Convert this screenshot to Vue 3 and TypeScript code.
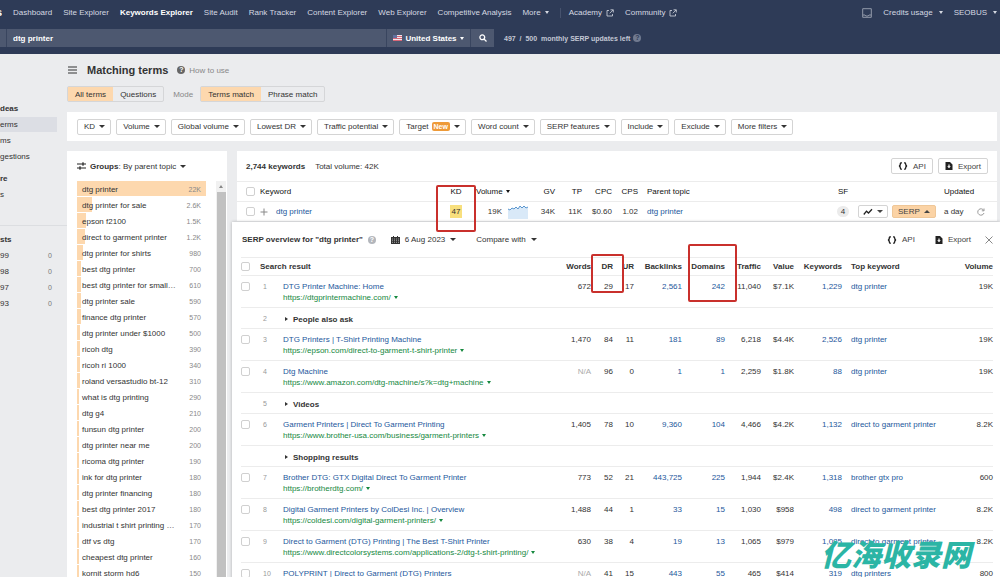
<script setup lang="ts">
import { h, ref, type FunctionalComponent } from 'vue'

const svg = (cls: string, box: string, d: string, extra: Record<string, string> = {}) =>
  h('svg', { class: cls, viewBox: box, 'aria-hidden': 'true', fill: 'none', stroke: 'currentColor', ...extra }, [h('path', { d })])

const External: FunctionalComponent = () =>
  svg('icon', '0 0 8 8', 'M3 1.5H1v5.5h5.5V5M4.5.8H7.3V3.5M7.2.9L3.8 4.3', { 'stroke-width': '0.8' })
const Braces: FunctionalComponent = () =>
  svg('icon wide', '0 0 10 8', 'M3.8.7C2.4.7 2.3 1.2 2.3 2.3S2.2 3.8 1 4C2.2 4.2 2.3 4.7 2.3 5.7S2.4 7.3 3.8 7.3M6.2.7C7.6.7 7.7 1.2 7.7 2.3S7.8 3.8 9 4C7.8 4.2 7.7 4.7 7.7 5.7S7.6 7.3 6.2 7.3', { stroke: '#222', 'stroke-width': '1.4' })
const FileDown: FunctionalComponent = () =>
  svg('icon', '0 0 8 8', 'M.5 0H5L7.5 2.5V8H.5ZM3.4 2.5V4.2H2.2L4 6.3L5.8 4.2H4.6V2.5Z', { fill: '#222', stroke: 'none', 'fill-rule': 'evenodd' })

const nav = ['Dashboard', 'Site Explorer', 'Keywords Explorer', 'Site Audit', 'Rank Tracker', 'Content Explorer', 'Web Explorer', 'Competitive Analysis']
const filters = ['KD', 'Volume', 'Global volume', 'Lowest DR', 'Traffic potential', 'Target', 'Word count', 'SERP features', 'Include', 'Exclude', 'More filters']
const lists = ['99', '98', '97', '93']
const query = ref('dtg printer')

const groups: { name: string; vol: string; share: number }[] = [
  { name: 'dtg printer', vol: '22K', share: 100 },
  { name: 'dtg printer for sale', vol: '2.6K', share: 12 },
  { name: 'epson f2100', vol: '1.5K', share: 7 },
  { name: 'direct to garment printer', vol: '1.2K', share: 6 },
  { name: 'dtg printer for shirts', vol: '980', share: 5 },
  { name: 'best dtg printer', vol: '700', share: 3 },
  { name: 'best dtg printer for small…', vol: '610', share: 3 },
  { name: 'dtg printer sale', vol: '590', share: 3 },
  { name: 'finance dtg printer', vol: '570', share: 3 },
  { name: 'dtg printer under $1000', vol: '500', share: 2 },
  { name: 'ricoh dtg', vol: '390', share: 2 },
  { name: 'ricoh ri 1000', vol: '340', share: 2 },
  { name: 'roland versastudio bt-12', vol: '310', share: 2 },
  { name: 'what is dtg printing', vol: '290', share: 1 },
  { name: 'dtg g4', vol: '210', share: 1 },
  { name: 'funsun dtg printer', vol: '200', share: 1 },
  { name: 'dtg printer near me', vol: '200', share: 1 },
  { name: 'ricoma dtg printer', vol: '190', share: 1 },
  { name: 'ink for dtg printer', vol: '180', share: 1 },
  { name: 'dtg printer financing', vol: '180', share: 1 },
  { name: 'best dtg printer 2017', vol: '180', share: 1 },
  { name: 'industrial t shirt printing …', vol: '170', share: 1 },
  { name: 'dtf vs dtg', vol: '170', share: 1 },
  { name: 'cheapest dtg printer', vol: '160', share: 1 },
  { name: 'kornit storm hd6', vol: '150', share: 1 },
]

interface Result {
  n: string
  title: string
  url?: string
  m?: string[]
  kw?: string
  vol?: string
}
const results: Result[] = [
  { n: '1', title: 'DTG Printer Machine: Home', url: 'https://dtgprintermachine.com/', m: ['672', '29', '17', '2,561', '242', '11,040', '$7.1K', '1,229'], kw: 'dtg printer', vol: '19K' },
  { n: '2', title: 'People also ask' },
  { n: '3', title: 'DTG Printers | T-Shirt Printing Machine', url: 'https://epson.com/direct-to-garment-t-shirt-printer', m: ['1,470', '84', '11', '181', '89', '6,218', '$4.4K', '2,526'], kw: 'dtg printer', vol: '19K' },
  { n: '4', title: 'Dtg Machine', url: 'https://www.amazon.com/dtg-machine/s?k=dtg+machine', m: ['N/A', '96', '0', '1', '1', '2,259', '$1.8K', '88'], kw: 'dtg printer', vol: '19K' },
  { n: '5', title: 'Videos' },
  { n: '6', title: 'Garment Printers | Direct To Garment Printing', url: 'https://www.brother-usa.com/business/garment-printers', m: ['1,405', '78', '10', '9,360', '104', '4,466', '$4.2K', '1,132'], kw: 'direct to garment printer', vol: '8.2K' },
  { n: '', title: 'Shopping results' },
  { n: '7', title: 'Brother DTG: GTX Digital Direct To Garment Printer', url: 'https://brotherdtg.com/', m: ['773', '52', '21', '443,725', '225', '1,944', '$2.4K', '1,318'], kw: 'brother gtx pro', vol: '600' },
  { n: '8', title: 'Digital Garment Printers by ColDesi Inc. | Overview', url: 'https://coldesi.com/digital-garment-printers/', m: ['1,488', '44', '1', '33', '15', '1,030', '$958', '498'], kw: 'direct to garment printer', vol: '8.2K' },
  { n: '9', title: 'Direct to Garment (DTG) Printing | The Best T-Shirt Printer', url: 'https://www.directcolorsystems.com/applications-2/dtg-t-shirt-printing/', m: ['630', '38', '4', '19', '13', '1,065', '$979', '1,085'], kw: 'direct to garment printer', vol: '8.2K' },
  { n: '10', title: 'POLYPRINT | Direct to Garment (DTG) Printers', m: ['N/A', '41', '15', '443', '55', '465', '$414', '319'], kw: 'dtg printers', vol: '800' },
]
const linked = [3, 4, 7]
</script>

<template>
  <div class="page">
    <header class="top">
      <nav class="nav">
        <b class="logo">s</b>
        <a v-for="item in nav" :key="item" href="#" :class="{ current: item === 'Keywords Explorer' }">{{ item }}</a>
        <button class="plain">More<i class="caret"></i></button>
        <span class="bar"></span>
        <a href="#" class="with-icon">Academy <External /></a>
        <a href="#" class="with-icon">Community <External /></a>
        <span class="account">
          <svg class="inbox" viewBox="0 0 10 10" fill="none" stroke="currentColor" aria-hidden="true"><path d="M.7.7h8.6v8.6H.7zM.7 7h2.3l.8 1h2.4l.8-1h2.3" /></svg>
          <button class="plain">Credits usage<i class="caret"></i></button>
          <button class="plain">SEOBUS<i class="caret"></i></button>
        </span>
      </nav>
      <form class="search" @submit.prevent>
        <div class="field">
          <span class="stub"></span>
          <input v-model="query" type="text" aria-label="Keyword" />
          <button type="button" class="country">
            <svg class="flag" viewBox="0 0 9 6" aria-hidden="true"><path fill="#f3e7ec" d="M0 0h9v6H0z" /><path fill="#d66878" d="M0 1h9v1H0zM0 3h9v1H0zM0 5h9v1H0z" /><path fill="#63719e" d="M0 0h4v3H0z" /></svg>
            United States<i class="caret"></i>
          </button>
          <button type="submit" class="go" aria-label="Search">
            <svg class="icon" viewBox="0 0 8 8" fill="none" stroke="currentColor" stroke-width="1.3" aria-hidden="true"><circle cx="3.3" cy="3.3" r="2.4" /><path d="M5 5l2.5 2.5" /></svg>
          </button>
        </div>
        <span class="quota">497&nbsp; / &nbsp;500&nbsp; monthly SERP updates left</span>
        <span class="help dim">?</span>
      </form>
    </header>

    <div class="body">
      <aside class="side">
        <b>deas</b>
        <a href="#" class="on">erms</a>
        <a href="#">ms</a>
        <a href="#">gestions</a>
        <b class="gap">re</b>
        <a href="#">s</a>
        <hr />
        <b>sts</b>
        <a v-for="l in lists" :key="l" href="#">{{ l }}<span>0</span></a>
      </aside>

      <main class="main">
        <div class="heading">
          <svg class="burger" viewBox="0 0 9 8" stroke="#333" stroke-width="1.2" aria-hidden="true"><path d="M0 1h9M0 4h9M0 7h9" /></svg>
          <h1>Matching terms</h1>
          <a href="#" class="how"><span class="help">?</span>How to use</a>
        </div>
        <div class="modes">
          <span class="toggle"><button class="on">All terms</button><button>Questions</button></span>
          <span class="mode">Mode</span>
          <span class="toggle"><button class="on">Terms match</button><button>Phrase match</button></span>
        </div>

        <section class="card filters">
          <button v-for="f in filters" :key="f" class="btn">
            {{ f }}<em v-if="f === 'Target'">New</em><i class="caret"></i>
          </button>
        </section>

        <div class="columns">
          <section class="card groups">
            <button class="plain by">
              <svg class="sliders" viewBox="0 0 9 8" fill="none" stroke="#222" stroke-width="1.2" aria-hidden="true"><path d="M0 2h9M0 6h9M6 .3v3.4M3 4.3v3.4" /></svg>
              <b>Groups</b>: By parent topic<i class="caret"></i>
            </button>
            <div class="scroller">
              <ul>
                <li v-for="g in groups" :key="g.name">
                  <span class="fill" :style="{ width: g.share + '%' }"></span>
                  <a href="#">{{ g.name }}</a><small>{{ g.vol }}</small>
                </li>
              </ul>
              <div class="track"><i class="caret up"></i><span></span></div>
            </div>
          </section>

          <div class="right">
            <section class="card keywords">
              <div class="tools">
                <b>2,744 keywords</b><span class="total">Total volume: 42K</span>
                <button class="btn push"><Braces />API</button>
                <button class="btn"><FileDown />Export</button>
              </div>
              <table class="kw">
                <colgroup><col class="w23" /><col /><col class="w40" /><col class="w32" /><col class="w20" /><col class="w27" /><col class="w27" /><col class="w30" /><col class="w26" /><col class="w190" /><col class="w30" /><col class="w80" /><col class="w39" /><col class="w20" /></colgroup>
                <thead>
                  <tr>
                    <th class="edge"><input type="checkbox" aria-label="Select all keywords" /></th>
                    <th>Keyword</th>
                    <th class="c">KD<span class="mark kd"></span></th>
                    <th class="r">Volume<i class="caret tight"></i></th>
                    <th></th><th class="r">GV</th><th class="r">TP</th><th class="r">CPC</th><th class="r">CPS</th>
                    <th class="lead">Parent topic</th><th class="c">SF</th><th></th><th class="upd">Updated</th><th></th>
                  </tr>
                </thead>
                <tbody>
                  <tr>
                    <td class="edge"><input type="checkbox" aria-label="Select dtg printer" /></td>
                    <td><span class="term"><svg class="icon" viewBox="0 0 8 8" stroke="#888" aria-hidden="true"><path d="M4 .5v7M.5 4h7" /></svg><a href="#">dtg printer</a></span></td>
                    <td class="c"><span class="score">47</span></td>
                    <td class="r inset">19K</td>
                    <td><svg class="spark" viewBox="0 0 20 14" aria-hidden="true"><path fill="#d9e9f8" d="M0 4l2 1 2-2 2 1 2-2 2 2 2-3 2 2 2-2 2 2 2-1v12H0z" /><path fill="none" stroke="#5a96cf" d="M0 4l2 1 2-2 2 1 2-2 2 2 2-3 2 2 2-2 2 2 2-1" /></svg></td>
                    <td class="r">34K</td><td class="r">11K</td><td class="r">$0.60</td><td class="r">1.02</td>
                    <td class="lead"><a href="#">dtg printer</a></td>
                    <td class="c"><span class="sf">4</span></td>
                    <td><span class="acts">
                      <button class="btn" aria-label="Trend"><svg class="trend" viewBox="0 0 10 8" fill="none" stroke="#222" stroke-width="1.3" aria-hidden="true"><path d="M.8 6.5L3.5 3.2L5.5 5L9 1.3" /></svg><i class="caret"></i></button>
                      <button class="btn on">SERP<i class="caret up"></i></button>
                    </span></td>
                    <td class="upd">a day</td>
                    <td><svg class="icon" viewBox="0 0 8 8" fill="none" stroke="#999" aria-hidden="true"><path d="M6.8 2.5A3.2 3.2 0 1 0 7 5M7 .5v2.3H4.8" /></svg></td>
                  </tr>
                </tbody>
              </table>
            </section>

            <section class="serp">
              <div class="tools">
                <b>SERP overview for "dtg printer"</b><span class="help dim">?</span>
                <button class="plain date">
                  <svg class="cal" viewBox="0 0 9 8" aria-hidden="true"><path fill="#333" d="M0 1h2V0h1v1h3V0h1v1h2v7H0z" /><path stroke="#fff" stroke-width=".5" stroke-dasharray="1 1" d="M1 3h7M1 4.7h7M1 6.4h7" /></svg>
                  6 Aug 2023<i class="caret"></i>
                </button>
                <button class="plain">Compare with<i class="caret"></i></button>
                <button class="plain push"><Braces />API</button>
                <button class="plain export"><FileDown />Export</button>
                <button class="plain" aria-label="Close"><svg class="icon" viewBox="0 0 8 8" stroke="#888" aria-hidden="true"><path d="M.5.5l7 7M7.5.5l-7 7" /></svg></button>
              </div>
              <table class="res">
                <colgroup><col class="w19" /><col class="w23" /><col /><col class="w38" /><col class="w22" /><col class="w21" /><col class="w48" /><col class="w43" /><col class="w36" /><col class="w33" /><col class="w48" /><col class="w110" /><col class="w41" /></colgroup>
                <thead>
                  <tr>
                    <th><input type="checkbox" aria-label="Select all results" /></th>
                    <th colspan="2">Search result</th>
                    <th class="r">Words</th>
                    <th class="r">DR<span class="mark dr"></span></th>
                    <th class="r">UR</th><th class="r">Backlinks</th>
                    <th class="r">Domains<span class="mark dom"></span></th>
                    <th class="r">Traffic</th><th class="r">Value</th><th class="r">Keywords</th>
                    <th class="lead">Top keyword</th><th class="r">Volume</th>
                  </tr>
                </thead>
                <tbody>
                  <tr v-for="r in results" :key="r.title" :class="{ group: !r.m }">
                    <td><input v-if="r.m" type="checkbox" :aria-label="'Select ' + r.title" /></td>
                    <td class="num">{{ r.n }}</td>
                    <template v-if="r.m">
                      <td class="page-link">
                        <a href="#">{{ r.title }}</a>
                        <a v-if="r.url" href="#" class="url">{{ r.url }}<i class="caret tight"></i></a>
                      </td>
                      <td v-for="(v, i) in r.m" :key="i" class="r" :class="{ na: v === 'N/A' }">
                        <a v-if="linked.includes(i)" href="#">{{ v }}</a><template v-else>{{ v }}</template>
                      </td>
                      <td class="lead"><a href="#">{{ r.kw }}</a></td>
                      <td class="r">{{ r.vol }}</td>
                    </template>
                    <td v-else colspan="11"><button class="plain expand"><i class="caret side-arrow"></i>{{ r.title }}</button></td>
                  </tr>
                </tbody>
              </table>
            </section>
          </div>
        </div>
      </main>
    </div>
    <div class="watermark" lang="zh-CN">亿海收录网</div>
  </div>
</template>

<style>
body { margin: 0; overflow: hidden; }
</style>

<style scoped>
* { box-sizing: border-box; }
.page { position: relative; height: 100vh; overflow: hidden; display: flex; flex-direction: column; background: #ebecee; color: #333; font: 8px/11px "Liberation Sans", Arial, sans-serif; }
a { color: inherit; text-decoration: none; }
button { font: inherit; color: inherit; margin: 0; cursor: pointer; white-space: nowrap; }
.plain { display: inline-flex; align-items: center; border: 0; padding: 0; background: none; }
.icon, :deep(.icon) { width: 8px; height: 8px; flex: none; display: block; }
:deep(.icon.wide) { width: 10px; }
.caret { display: inline-block; flex: none; margin-left: 4px; border: solid transparent; border-width: 3px 3px 0; border-top-color: currentColor; vertical-align: middle; }
.caret.up { border-width: 0 3px 3px; border-bottom-color: currentColor; }
.caret.tight { margin-left: 3px; border-width: 3px 2px 0; }
.caret.side-arrow { margin: 0 5px 0 0; border-width: 2px 0 2px 3px; border-left-color: currentColor; border-top-color: transparent; }
.help { display: inline-block; flex: none; width: 8px; height: 8px; border-radius: 50%; background: #666; color: #fff; font-size: 7px; line-height: 8px; font-weight: bold; text-align: center; }
.help.dim { background: #b3b6bc; }
input[type='checkbox'] { appearance: none; display: block; width: 9px; height: 9px; margin: 0; border: 1px solid #d0d0d0; border-radius: 2px; background: #fff; }

.top { flex: none; height: 54px; background: #2e3b57; color: #d5d9e2; }
.nav { display: flex; align-items: center; height: 25px; gap: 11px; white-space: nowrap; padding-right: 3px; }
.nav .caret { border-width: 3px 2px 0; }
.logo { width: 2px; display: flex; justify-content: flex-end; overflow: hidden; font-size: 11px; color: #fff; }
.current { color: #fff; font-weight: bold; }
.bar { width: 1px; height: 10px; margin: 0 -3px 0 0; background: #46526d; }
.with-icon { display: flex; align-items: center; gap: 4px; }
.account { display: flex; align-items: center; gap: 11px; margin-left: auto; }
.account .caret { margin-left: 6px; }
.inbox { width: 10px; height: 10px; opacity: .6; }
.search { display: flex; align-items: center; margin: 4px 0 0; }
.field { display: flex; flex: 0 1 494px; height: 18px; background: #4d5870; font-weight: bold; color: #fff; }
.stub { width: 7px; border-right: 1px solid #39455f; }
.field input { flex: 1; min-width: 0; padding: 0 6px; border: 0; outline: 0; background: none; font: inherit; font-size: 8px; color: inherit; }
.field button { display: flex; align-items: center; justify-content: center; padding: 0; border: 0; border-left: 1px solid #39455f; background: none; }
.country { width: 84px; gap: 3px; }
.country .caret { margin-left: 0; border-width: 3px 2px 0; }
.flag { width: 9px; height: 6px; }
.go { width: 24px; }
.quota { margin: 0 3px 0 10px; font-size: 7px; font-weight: bold; color: #c3c8d4; }
.search .dim { background: #707a90; color: #2e3b57; }

.body { display: flex; flex: 1; min-height: 0; }
.side { flex: none; width: 67px; padding-top: 47px; overflow: hidden; }
.side > b, .side > a { display: flex; justify-content: space-between; width: 57px; padding-right: 5px; line-height: 15px; height: 15px; margin-bottom: 1px; }
.side .on { background: #dcdee4; }
.side .gap { margin-top: 7px; }
.side span { font-size: 7px; color: #777; }
.side hr { margin: 23px 0 6px; border: 0; border-top: 1px solid #dcdee1; }
.main { flex: 1; min-width: 0; display: flex; flex-direction: column; padding: 8px 3px 0 0; }
.heading, .modes { display: flex; align-items: center; height: 16px; flex: none; }
.burger { width: 9px; height: 8px; margin: 0 10px 0 1px; }
h1 { margin: 0 9px 0 0; font-size: 11px; line-height: 16px; }
.how { display: flex; align-items: center; gap: 4px; color: #888; }
.modes { margin: 8px 0 10px; }
.toggle { display: flex; height: 16px; border: 1px solid #d5d6d8; border-radius: 2px; }
.toggle button { border: 0; padding: 0 7px; background: none; }
.toggle .on { background: #fdd8ae; }
.mode { margin: 0 7px 0 9px; color: #888; }
.card { background: #fff; }
.filters { display: flex; align-items: center; gap: 5px; height: 29px; flex: none; padding: 0 10px; }
.btn { display: inline-flex; align-items: center; height: 16px; border: 1px solid #d4d4d4; border-radius: 2px; padding: 0 6px; background: #fff; }
.filters .btn { padding: 0 5px 0 6px; }
.filters em { margin-left: 3px; padding: 0 2px; border-radius: 2px; background: #ee9a38; color: #fff; font: bold 7px/9px "Liberation Sans", sans-serif; }
.columns { display: flex; gap: 10px; flex: 1; min-height: 0; margin-top: 10px; }
.groups { flex: none; width: 160px; display: flex; flex-direction: column; }
.by { height: 30px; flex: none; padding-left: 10px; }
.by .sliders { width: 9px; height: 8px; margin-right: 4px; }
.scroller { display: flex; flex: 1; min-height: 0; }
ul { flex: 1; margin: 0; padding: 0 0 0 10px; list-style: none; overflow: hidden; }
li { position: relative; display: flex; justify-content: space-between; align-items: center; height: 16px; padding: 0 5px; white-space: nowrap; }
li a, li small { position: relative; }
li small { font-size: 7px; color: #888; }
.fill { position: absolute; left: 0; top: 0; bottom: 1px; min-width: 2px; background: #fdd8ae; }
.track { display: flex; flex-direction: column; align-items: center; width: 10px; margin: 0 1px 0 10px; background: #f1f1f1; color: #888; }
.track .caret { margin: 4px 0; border-width: 0 2px 3px; }
.track span { flex: 1; width: 9px; background: #c1c1c1; }

.right { flex: 1; min-width: 0; display: flex; flex-direction: column; }
.tools { display: flex; align-items: center; }
.keywords .tools { height: 30px; padding: 0 9px; gap: 5px; }
.tools button { gap: 5px; }
.tools .push, .tools .export, .keywords .btn { color: #444; }
.tools .caret { margin-left: 0; }
.total { margin-left: 5px; }
.push { margin-left: auto; }
table { width: 100%; table-layout: fixed; border-collapse: separate; border-spacing: 0; }
th, td { padding: 0; text-align: left; font-weight: normal; white-space: nowrap; }
th { position: relative; font-weight: bold; }
td a { color: #24589c; }
.r { text-align: right; }
.c { text-align: center; }
.lead { padding-left: 9px; }
.kw th, .kw td { height: 20px; border-top: 1px solid #ececec; vertical-align: middle; }
.kw th { font-weight: normal; color: #111; }
.edge { padding-left: 9px; }
.kw .inset { padding-right: 6px; }
.upd { padding-left: 6px; }
.term { display: flex; align-items: center; gap: 8px; }
.score { display: inline-block; padding: 1px 2px; background: #f8df7d; }
.spark { display: block; width: 20px; height: 14px; }
.sf { display: inline-block; width: 12px; border-radius: 6px; background: #ebebeb; }
.acts { display: flex; gap: 4px; }
.acts .btn { height: 13px; padding: 0 4px; }
.acts .on { background: #fbd3a5; border-color: #efc798; padding: 0 5px; }
.trend { width: 10px; height: 8px; }
.serp { flex: 1; margin: 1px -3px 0 -5px; padding: 0 7px 0 9px; background: #fff; box-shadow: 0 0 3px rgba(0, 0, 0, .25); }
.serp .tools { height: 35px; }
.serp .tools > b { margin: 0 5px 0 1px; }
.serp .date { margin: 0 20px 0 15px; }
.cal { width: 9px; height: 8px; }
.serp .export { margin: 0 14px 0 20px; }
.res th { height: 19px; border: solid #ececec; border-width: 1px 0; }
.res td { height: 32px; padding-top: 5px; border-bottom: 1px solid #ececec; vertical-align: top; }
.res .group td { height: 21px; }
.res td input { margin-top: 1px; }
.res .num { padding-left: 3px; font-size: 7px; color: #999; }
.page-link a { display: block; width: max-content; }
.page-link .url { color: #15883e; }
.na { color: #aaa; }
.expand { font-weight: bold; padding-left: 2px; }
.mark { position: absolute; z-index: 2; border: 2px solid #c9302c; border-radius: 2px; }
.kd { left: 0; top: 3px; width: 40px; height: 47px; }
.dr { left: 0; top: -4px; width: 33px; height: 39px; }
.dom { left: 6px; top: -14px; width: 49px; height: 58px; }
.watermark { position: absolute; z-index: 3; right: 29px; bottom: 8px; color: #2bb5a5; font: italic 900 30px/32px "Noto Sans CJK SC", sans-serif; }

.w19 { width: 19px; } .w20 { width: 20px; } .w21 { width: 21px; } .w22 { width: 22px; } .w23 { width: 23px; }
.w26 { width: 26px; } .w27 { width: 27px; } .w30 { width: 30px; } .w32 { width: 32px; } .w33 { width: 33px; }
.w36 { width: 36px; } .w38 { width: 38px; } .w39 { width: 39px; } .w40 { width: 40px; } .w41 { width: 41px; }
.w43 { width: 43px; } .w48 { width: 48px; } .w80 { width: 80px; } .w110 { width: 110px; } .w190 { width: 190px; }
</style>
